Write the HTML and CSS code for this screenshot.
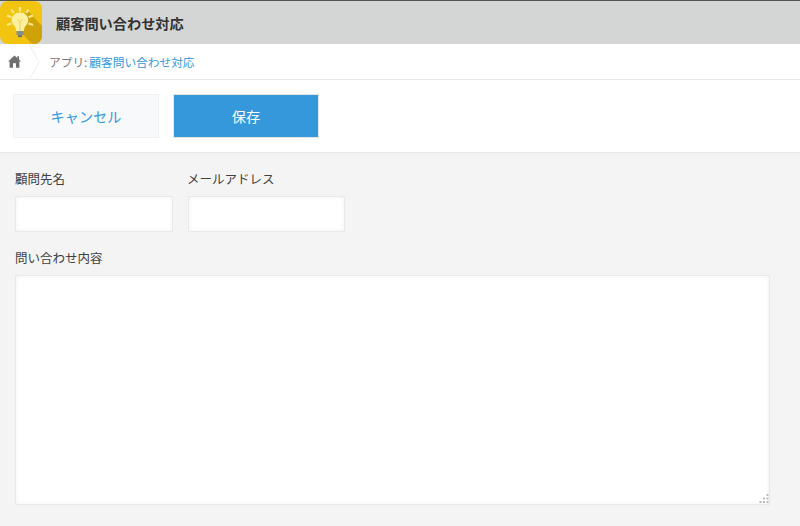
FILE: index.html
```html
<!DOCTYPE html>
<html lang="ja">
<head>
<meta charset="utf-8">
<title>顧客問い合わせ対応</title>
<link rel="stylesheet" href="styles.css">
</head>
<body>
<header class="app-header">
  <div class="app-icon">
    <svg width="42" height="43" viewBox="0 0 42 43">
      <path class="icon-shadow" d="M12 22 L28 10 L42 25 V43 H32 Z"/>
      <path class="rays" d="M20 6V10.500M11.300 8.500l2.500 3.300M28.700 8.500l-2.500 3.300M7 14.500l4.500 1.800M33 14.500l-4.500 1.800M7 24l4.500-1.500M33 24l-4.500-1.500"/>
      <path class="bulb" d="M20 11.500c-4.700 0-8.300 3.500-8.300 7.800 0 3 1.900 4.600 3.100 6.300.7 1.100 1.200 2.400 1.200 4.400h8c0-2 .5-3.300 1.200-4.400 1.200-1.700 3.100-3.300 3.100-6.300 0-4.300-3.600-7.800-8.300-7.800z"/>
      <path class="filament" d="M17.500 18l2.500 3.500 2.500-3.500M20 21.500V30"/>
      <rect class="base" x="16.500" y="30" width="7" height="4.200" rx=".8"/>
      <rect class="base-tip" x="18" y="34.200" width="4" height="2"/>
    </svg>
  </div>
  <h1 class="app-title">顧客問い合わせ対応</h1>
</header>
<nav class="breadcrumb">
  <a class="home" aria-label="ホーム">
    <svg width="13" height="13" viewBox="0 0 13 13"><path d="M6.500 .5 L9.300 3 V1.300 H11 V4.600 L13 6.600 H11.400 V12.700 H8 V8.300 H5 V12.700 H1.600 V6.600 H0 Z"/></svg>
  </a>
  <svg class="chevron" width="12" height="36" viewBox="0 0 12 36"><path d="M0 0 L10 18 L0 36"/></svg>
  <span class="crumb-label">アプリ:</span>
  <a class="crumb-link">顧客問い合わせ対応</a>
</nav>
<div class="toolbar">
  <button class="btn btn-cancel">キャンセル</button>
  <button class="btn btn-save">保存</button>
</div>
<main class="form">
  <div class="row">
    <div class="field">
      <label class="label">顧問先名</label>
      <input class="input input-first" type="text">
    </div>
    <div class="field">
      <label class="label label-katakana">メールアドレス</label>
      <input class="input input-second" type="text">
    </div>
  </div>
  <div class="field">
    <label class="label">問い合わせ内容</label>
    <div class="textarea">
      <svg class="grip" width="10" height="10" viewBox="0 0 10 10">
        <rect x="7.500" y="0" width="2" height="2"/>
        <rect x="4" y="3.500" width="2" height="2"/><rect x="7.500" y="3.500" width="2" height="2"/>
        <rect x="0.500" y="7" width="2" height="2"/><rect x="4" y="7" width="2" height="2"/><rect x="7.500" y="7" width="2" height="2"/>
      </svg>
    </div>
  </div>
</main>
</body>
</html>
```
FILE: styles.css
```css
* { box-sizing: border-box; }
html, body { margin: 0; height: 100%; }
body {
  width: 800px;
  height: 526px;
  overflow: hidden;
  background: #f4f4f4;
  font-family: "Noto Sans CJK JP", "Noto Sans", sans-serif;
  color: #333;
}
.app-header {
  height: 44px;
  display: flex;
  align-items: center;
  background: #d4d6d6;
  border-top: 1px solid #555;
}
.app-icon {
  width: 42px;
  height: 43px;
  border-radius: 8px;
  background: #f2c40f;
  overflow: hidden;
  flex: none;
}
.app-icon svg { display: block; }
.icon-shadow { fill: #cfa208; }
.rays { stroke: #fbe98a; stroke-width: 2.200; fill: none; }
.bulb { fill: #fbf0a0; }
.filament { stroke: #ecd060; stroke-width: 1; fill: none; }
.base { fill: #8a8d90; }
.base-tip { fill: #6d7073; }
.app-title {
  margin: 0 0 0 14px;
  font-size: 14.200px;
  font-weight: 700;
  line-height: 44px;
  color: #333;
}
.breadcrumb {
  height: 36px;
  display: flex;
  align-items: center;
  background: #fff;
  border-bottom: 1px solid #e8e8e8;
}
.home { display: flex; margin-left: 8px; width: 21px; }
.home path { fill: #707070; }
.chevron { flex: none; margin-right: 8px; }
.chevron path { fill: #fff; stroke: #ececec; stroke-width: 1; }
.crumb-label { font-size: 11.700px; color: #777; margin-right: 2px; }
.crumb-link { font-size: 11.700px; color: #3498db; }
.toolbar {
  height: 73px;
  display: flex;
  align-items: flex-start;
  gap: 14px;
  padding: 14px 0 0 13px;
  background: #fff;
  border-bottom: 1px solid #e6e8e8;
}
.btn {
  height: 44px;
  font-family: inherit;
  font-size: 14.200px;
  padding: 0;
  cursor: pointer;
}
.btn-cancel {
  width: 146px;
  background: #f7f9fa;
  border: 1px solid #eef0f1;
  color: #3498db;
}
.btn-save {
  width: 146px;
  background: #3498db;
  border: 1px solid #e3e7e8;
  color: #fff;
}
.form {
  display: flex;
  flex-direction: column;
  gap: 16px;
  padding: 16px 0 0 15px;
}
.row { display: flex; gap: 15px; }
.field { display: flex; flex-direction: column; }
.label {
  font-size: 12.500px;
  line-height: 19px;
  color: #404040;
  margin-bottom: 8px;
}
.label-katakana { margin-left: -1px; }
.input {
  height: 36px;
  background: #fff;
  border: 1px solid #e8e9e9;
  box-shadow: inset 0 0 4px #f0f0f0;
  padding: 0;
  outline: none;
}
.input-first { width: 158px; }
.input-second { width: 157px; }
.textarea {
  position: relative;
  width: 755px;
  height: 230px;
  background: #fff;
  border: 1px solid #e8e9e9;
  box-shadow: inset 0 0 4px #f0f0f0;
}
.grip {
  position: absolute;
  right: 0;
  bottom: 0;
}
.grip rect { fill: #b5bcbf; }
```
